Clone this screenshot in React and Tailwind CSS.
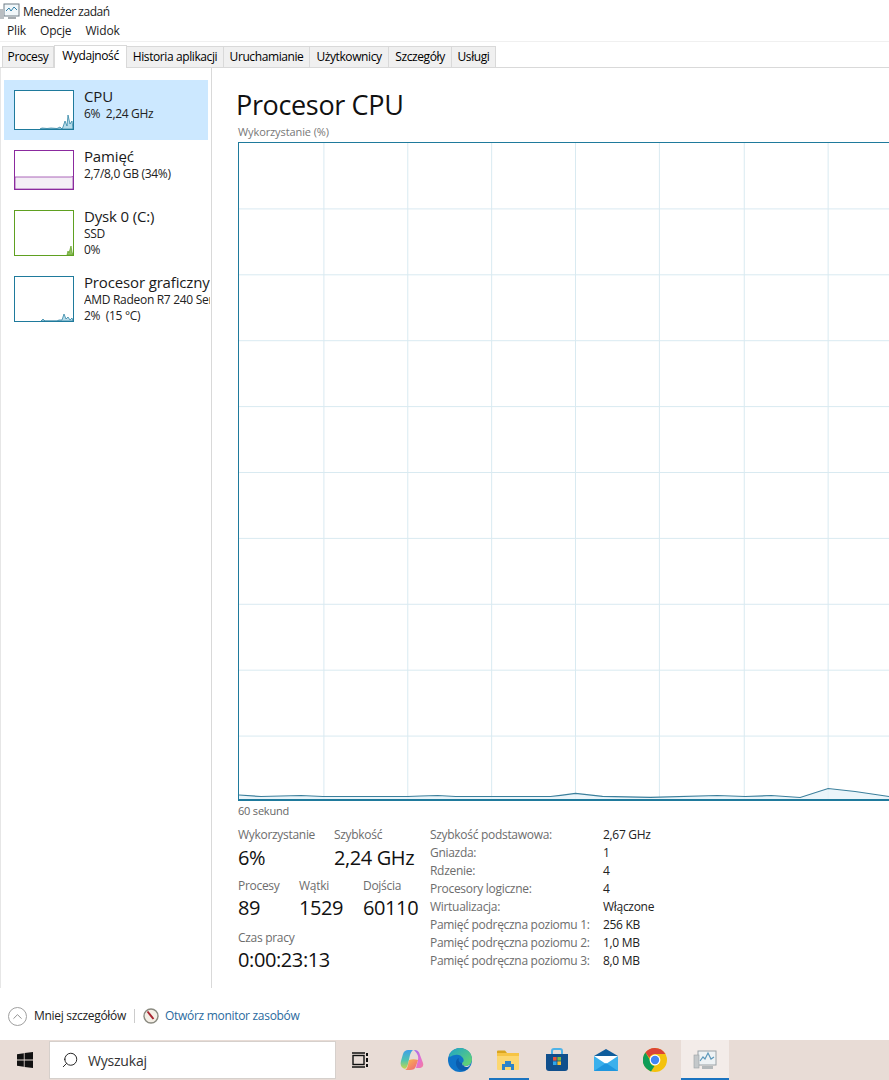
import { ChevronUp, Search } from "lucide-react";

const tabs = [
  { name: "Procesy", w: "w-[52px]" },
  { name: "Wydajność", w: "w-[73px]", active: true },
  { name: "Historia aplikacji", w: "w-[97px]" },
  { name: "Uruchamianie", w: "w-[86px]" },
  { name: "Użytkownicy", w: "w-[79px]" },
  { name: "Szczegóły", w: "w-[63px]" },
  { name: "Usługi", w: "w-[44px]" },
];

const leftInfo = [
  ["Szybkość podstawowa:", "2,67 GHz"],
  ["Gniazda:", "1"],
  ["Rdzenie:", "4"],
  ["Procesory logiczne:", "4"],
  ["Wirtualizacja:", "Włączone"],
  ["Pamięć podręczna poziomu 1:", "256 KB"],
  ["Pamięć podręczna poziomu 2:", "1,0 MB"],
  ["Pamięć podręczna poziomu 3:", "8,0 MB"],
];

const vLines = [85, 169, 253, 337, 421, 506, 590];
const hLines = [66, 132, 198, 264, 330, 396, 462, 528, 594];
const cpuPts =
  "0,653 22,654.5 42,654 62,653.5 84,654.5 169,654.5 182,654 199,653.5 217,654.5 262,654.5 312,654.5 322,653.3 337,651.3 364,654.3 412,655.3 479,653.5 507,654.5 533,653.5 562,655.5 590,646.5 617,649.5 651,654.5";

function MiniChart({ color, fill, line, tall }) {
  const vh = tall ? 44 : 38;
  return (
    <div className={`w-[60px] ${tall ? "h-[46px]" : "h-[40px]"} border box-border bg-white shrink-0`} style={{ borderColor: color }}>
      <svg viewBox={`0 0 58 ${vh}`} preserveAspectRatio="none" className="w-full h-full block">
        <polygon points={line} fill={fill} stroke={color} strokeWidth="0.7" />
      </svg>
    </div>
  );
}

function SideItem({ title, lines, active, chart, className }) {
  return (
    <div className={`flex items-start gap-[10px] pl-[10px] ${active ? "bg-[#cce8ff]" : ""} ${className}`}>
      {chart}
      <div className="-mt-[4px] whitespace-pre shrink-0 overflow-hidden w-[126px] tracking-[-0.3px]">
        <div className="text-[15px] leading-[20px] text-[#1a1a1a] tracking-[-0.15px]">{title}</div>
        {lines.map((l) => (
          <div key={l} className="text-[12px] leading-[16px] text-[#222]">{l}</div>
        ))}
      </div>
    </div>
  );
}

function Stat({ label, value, className, valueClass = "" }) {
  return (
    <div className={className}>
      <div className="text-[12px] leading-[16px] text-[#6d6d6d] tracking-[-0.3px] whitespace-nowrap">{label}</div>
      <div className={`text-[20px] leading-[27px] text-[#111] tracking-[-0.4px] whitespace-nowrap ${valueClass}`}>{value}</div>
    </div>
  );
}

function TaskIcon() {
  return (
    <svg viewBox="0 0 20 17" className="w-[20px] h-[17px] shrink-0">
      <rect x="4" y="1" width="15" height="12" fill="#f1f7fa" stroke="#6f7d86" strokeWidth="1" />
      <polyline points="6,8 9,5 11,8 14,4 17,7" fill="none" stroke="#2f7fa8" strokeWidth="1" />
      <rect x="0" y="6" width="4" height="10" fill="#b9bec2" />
      <rect x="8" y="14" width="8" height="2" fill="#a5abaf" />
    </svg>
  );
}

export default function App() {
  return (
    <div className="w-[889px] h-[1080px] overflow-hidden bg-white flex flex-col font-['Open_Sans',sans-serif] text-black">
      {/* title + menu */}
      <div className="h-[20px] flex items-center gap-[3px] pl-[0px] pt-[3px]">
        <TaskIcon />
        <span className="text-[12px] tracking-[-0.45px] text-[#222]">Menedżer zadań</span>
      </div>
      <div className="h-[22px] flex items-center gap-[14px] pl-[7px] text-[12px] tracking-[-0.15px] text-[#222] border-b border-[#f0f0f0]">
        <span>Plik</span>
        <span>Opcje</span>
        <span>Widok</span>
      </div>

      {/* tabs */}
      <div className="h-[26px] flex items-end pl-[2px] border-b border-[#d9d9d9]">
        {tabs.map((t) => (
          <div
            key={t.name}
            className={`${t.w} flex items-center justify-center text-[12px] tracking-[-0.4px] whitespace-nowrap border-t border-r border-[#d9d9d9] ${
              t.active
                ? "h-[23px] bg-white border-l -mb-px pb-[3px]"
                : "h-[21px] bg-[#f0f0f0] first:border-l"
            }`}
          >
            {t.name}
          </div>
        ))}
      </div>

      <div className="flex flex-1 min-h-0 border-l border-[#e6e6e6]">
        {/* sidebar */}
        <div className="w-[211px] h-[920px] border-r border-[#d9d9d9] pt-[12px] pl-[3px] shrink-0 overflow-hidden">
          <SideItem
            active
            className="w-[204px] h-[60px] pt-[10px]"
            title="CPU"
            lines={["6%  2,24 GHz"]}
            chart={
              <MiniChart
                color="#1f7a9c"
                fill="#b8dcea"
                line="25,38 27,37 32,37.5 36,37 42,37.5 45,36 47,38 48,36 50,30 52,35 53,24 55,33 57,30 58,38"
              />
            }
          />
          <SideItem
            className="w-[204px] h-[60px] pt-[10px]"
            title="Pamięć"
            lines={["2,7/8,0 GB (34%)"]}
            chart={<MiniChart color="#8b2a9e" fill="#f4eef6" line="0,26 56,26 58,25.5 58,38 0,38" />}
          />
          <SideItem
            className="w-[204px] h-[66px] pt-[10px]"
            title="Dysk 0 (C:)"
            lines={["SSD", "0%"]}
            chart={<MiniChart tall color="#5fa021" fill="#8fc060" line="52,44 53,40 54,42 56,35 57,41 58,44" />}
          />
          <SideItem
            className="w-[204px] h-[66px] pt-[10px]"
            title="Procesor graficzny"
            lines={["AMD Radeon R7 240 Series", "2%  (15 °C)"]}
            chart={
              <MiniChart
                tall
                color="#1f7a9c"
                fill="#b8dcea"
                line="26,44 28,42 30,44 42,44 44,43 47,43 49,37 51,42 53,40 55,43 57,41 58,44"
              />
            }
          />
        </div>

        {/* main */}
        <div className="flex-1 pl-[26px] pt-[19px] min-w-0">
          <h1 className="text-[27px] leading-[35px] -ml-[2px] text-[#111] tracking-[-0.35px]">Procesor CPU</h1>
          <div className="text-[11px] leading-[14px] mt-[3px] text-[#777] tracking-[-0.1px]">Wykorzystanie (%)</div>

          <div className="w-[700px] h-[659px] mt-[3px] border-l border-t border-b-2 border-[#1f7a9c] bg-white">
            <svg viewBox="0 0 700 657" className="w-full h-full block">
              {vLines.map((x) => (
                <line key={x} x1={x} x2={x} y1="0" y2="657" stroke="#d9eaf1" strokeWidth="1" />
              ))}
              {hLines.map((y) => (
                <line key={y} x1="0" x2="700" y1={y} y2={y} stroke="#d9eaf1" strokeWidth="1" />
              ))}
              <polygon points={`0,657 ${cpuPts} 651,657`} fill="#e6f3f9" fillOpacity="0.8" />
              <polyline points={cpuPts} fill="none" stroke="#3b7f9c" strokeWidth="1.2" />
            </svg>
          </div>
          <div className="text-[11px] leading-[14px] mt-[3px] text-[#666] tracking-[-0.2px]">60 sekund</div>

          {/* stats */}
          <div className="flex mt-[9px]">
            <div className="w-[192px] shrink-0">
              <div className="flex">
                <Stat label="Wykorzystanie" value="6%" className="w-[96px]" valueClass="mt-[1px]" />
                <Stat label="Szybkość" value="2,24 GHz" valueClass="mt-[1px]" />
              </div>
              <div className="flex mt-[7px]">
                <Stat label="Procesy" value="89" className="w-[61px]" />
                <Stat label="Wątki" value="1529" className="w-[64px]" />
                <Stat label="Dojścia" value="60110" />
              </div>
              <Stat label="Czas pracy" value="0:00:23:13" className="mt-[9px]" />
            </div>
            <div className="grid grid-cols-[173px_1fr] auto-rows-[18px] text-[12px] leading-[18px] tracking-[-0.3px] -mt-px">
              {leftInfo.map(([k, v]) => [
                <div key={k} className="text-[#6d6d6d] whitespace-nowrap">{k}</div>,
                <div key={k + "v"} className="text-[#222] whitespace-nowrap">{v}</div>,
              ])}
            </div>
          </div>
        </div>
      </div>

      {/* footer */}
      <div className="h-[52px] shrink-0 flex items-center pl-[8px] pt-[4px] text-[12px] tracking-[-0.3px]">
        <div className="w-[19px] h-[19px] rounded-full border border-[#a0a0a0] flex items-center justify-center text-[#777]">
          <ChevronUp size={15} strokeWidth={1.3} />
        </div>
        <span className="ml-[7px] text-[#222]">Mniej szczegółów</span>
        <div className="w-px h-[14px] bg-[#ccc] mx-[8px]" />
        <svg viewBox="0 0 16 16" className="w-[16px] h-[16px]">
          <circle cx="8" cy="8" r="7" fill="#f4efe6" stroke="#8a8a80" strokeWidth="1.4" />
          <line x1="4.5" y1="3.5" x2="10.5" y2="11" stroke="#a82530" strokeWidth="2" />
        </svg>
        <span className="ml-[6px] text-[#2a6a9e]">Otwórz monitor zasobów</span>
      </div>

      {/* taskbar */}
      <div className="h-[40px] shrink-0 bg-[#e8dcd6] flex items-stretch">
        <div className="w-[49px] flex items-center justify-center">
          <svg viewBox="0 0 16 16" className="w-[16px] h-[16px]">
            <path d="M0 2.2 6.8 1.2v6.3H0zM7.6 1.1 16 0v7.5H7.6zM0 8.4h6.8v6.4L0 13.8zM7.6 8.4H16V16l-8.4-1.1z" fill="#111" />
          </svg>
        </div>
        <div className="w-[287px] bg-white border border-[#d6d0cc] flex items-center pl-[11px] gap-[9px] mt-px mb-px">
          <Search size={18} strokeWidth={1.3} className="-scale-x-100 text-[#222]" />
          <span className="text-[14px] text-[#333] tracking-[-0.2px]">Wyszukaj</span>
        </div>
        <div className="relative flex-1">
          <div className="flex items-center h-full">
            {/* task view */}
            <div className="w-[49px] flex justify-center">
              <svg viewBox="0 0 17 16" className="w-[17px] h-[16px]">
                <rect x="1" y="3.5" width="11" height="9" fill="none" stroke="#111" strokeWidth="1.4" />
                <path d="M0 1h13M0 15h13" stroke="#111" strokeWidth="1.4" />
                <rect x="14" y="1" width="2" height="3" fill="#111" />
                <rect x="14" y="6" width="2" height="4" fill="#111" />
                <rect x="14" y="12" width="2" height="3" fill="#111" />
              </svg>
            </div>
            {/* copilot */}
            <div className="w-[49px] ml-[2px] flex justify-center">
              <svg viewBox="0 0 24 24" className="w-[24px] h-[24px]">
                <defs>
                  <linearGradient id="copA" x1="0" y1="0" x2="0" y2="1">
                    <stop offset="0" stopColor="#3f9fe8" />
                    <stop offset="0.55" stopColor="#4fc4b0" />
                    <stop offset="1" stopColor="#c5d84a" />
                  </linearGradient>
                  <linearGradient id="copB" x1="0" y1="0" x2="1" y2="1">
                    <stop offset="0" stopColor="#9a6ff0" />
                    <stop offset="0.6" stopColor="#e46fd0" />
                    <stop offset="1" stopColor="#f57f9a" />
                  </linearGradient>
                  <linearGradient id="copC" x1="0" y1="0" x2="1" y2="1">
                    <stop offset="0" stopColor="#f8c04a" />
                    <stop offset="1" stopColor="#f0607a" />
                  </linearGradient>
                </defs>
                <path d="M8 2h6c-2 0-3 2-4 5l-2 9c-1 4-3 6-5 4-2-1-3-4-2-7l2-7c1-3 3-4 5-4z" fill="url(#copA)" />
                <path d="M14 2c3 0 5 1 6 5l3 8c1 3-1 5-4 5h-3l2-8c1-4-1-7-4-10z" fill="url(#copB)" />
                <path d="M9 12c3-1 6-1 9 0l-2 6c-1 3-3 4-6 4H5c3-1 3-7 4-10z" fill="url(#copC)" />
              </svg>
            </div>
            {/* edge */}
            <div className="w-[49px] -ml-[1px] flex justify-center">
              <svg viewBox="0 0 24 24" className="w-[24px] h-[24px]">
                <defs>
                  <linearGradient id="edgeA" x1="0" y1="0" x2="1" y2="1">
                    <stop offset="0" stopColor="#1fa3c9" />
                    <stop offset="1" stopColor="#6ad96a" />
                  </linearGradient>
                </defs>
                <circle cx="12" cy="12" r="12" fill="#0f74c8" />
                <path d="M1 8C3 2 8 0 12 0c7 0 12 5 12 11 0 5-4 7-7 7-3 0-4-2-3-3 2-1 2-3 1-5-2-3-5-4-8-3-3 0-5 3-6 1z" fill="url(#edgeA)" />
                <path d="M14 15c-3 0-4-3-3-5-3 1-4 5-2 9 2 4 7 5 11 2l1-3c-3 1-5 1-7-3z" fill="#0b5cad" />
                <path d="M24 13c-1 3-3 5-7 5-2 0-3-1-3-3 1 3 3 4 5 4 1 0 3-1 5-6z" fill="#e8dcd6" />
              </svg>
            </div>
            {/* explorer */}
            <div className="w-[49px] -ml-[1px] flex justify-center">
              <svg viewBox="0 0 22 20" className="w-[22px] h-[20px]">
                <path d="M0 1.5A1 1 0 0 1 1 .5h7l2 2.500H0z" fill="#d9a520" />
                <rect x="0" y="3" width="22" height="17" rx="1" fill="#fcd771" />
                <rect x="0" y="3" width="22" height="3" fill="#f6c445" />
                <path d="M5 20v-6h3v-3h6v3h3v6h-3v-3H8v3z" fill="#2d84c9" />
              </svg>
            </div>
            {/* store */}
            <div className="w-[49px] flex justify-center">
              <svg viewBox="0 0 24 24" className="w-[24px] h-[24px]">
                <path d="M7 6V3c0-1 1-2 2-2h6c1 0 2 1 2 2v3" fill="none" stroke="#4fb3e8" strokeWidth="2" />
                <path d="M1 6h22v14a3 3 0 0 1-3 3H4a3 3 0 0 1-3-3z" fill="#104f8c" />
                <rect x="8" y="9" width="3.6" height="3.6" fill="#e9553b" />
                <rect x="12.400" y="9" width="3.6" height="3.6" fill="#7fbb3f" />
                <rect x="8" y="13.400" width="3.6" height="3.6" fill="#2fa6e8" />
                <rect x="12.400" y="13.400" width="3.6" height="3.6" fill="#f5bd2e" />
              </svg>
            </div>
            {/* mail */}
            <div className="w-[49px] flex justify-center">
              <svg viewBox="0 0 24 22" className="w-[24px] h-[22px]">
                <path d="M0 7 12 0l12 7v2H0z" fill="#0f5d9c" />
                <rect x="0" y="7" width="24" height="15" fill="#3ab0ec" />
                <path d="M0 7l12 8 12-8H0z" fill="#fff" />
                <path d="M0 22l12-8 12 8z" fill="#1e96de" />
              </svg>
            </div>
            {/* chrome */}
            <div className="w-[49px] flex justify-center">
              <svg viewBox="0 0 24 24" className="w-[24px] h-[24px]">
                <circle cx="12" cy="12" r="12" fill="#f4c20d" />
                <path d="M12 0a12 12 0 0 1 10.400 6H12a6 6 0 0 0-5.600 3.800L2.400 4.500A12 12 0 0 1 12 0z" fill="#db4437" />
                <path d="M2.400 4.500 7 12a5 5 0 0 0 4.500 6L8 23.400A12 12 0 0 1 2.400 4.500z" fill="#0f9d58" />
                <circle cx="12" cy="12" r="5.400" fill="#fff" />
                <circle cx="12" cy="12" r="4.200" fill="#4285f4" />
              </svg>
            </div>
            {/* task manager */}
            <div className="w-[48px] ml-[2px] h-full bg-[#f3ece9] border-b-2 border-[#1a73c0] flex justify-center items-center">
              <svg viewBox="0 0 24 22" className="w-[24px] h-[22px]">
                <rect x="5" y="3" width="18" height="14" fill="#eef2f4" stroke="#9aa2a7" />
                <polyline points="7,13 10,9 12,11 15,5 18,11 21,9" fill="none" stroke="#5b97ba" strokeWidth="1.2" />
                <rect x="1" y="7" width="5" height="13" fill="#c4c8ca" stroke="#9ba0a3" strokeWidth="0.6" />
                <rect x="9" y="18" width="11" height="3" fill="#b3b8ba" />
              </svg>
            </div>
          </div>
          {/* running indicator under explorer */}
          <div className="absolute bottom-0 left-[153px] w-[40px] h-[2px] bg-[#1a73c0]" />
        </div>
      </div>
    </div>
  );
}
